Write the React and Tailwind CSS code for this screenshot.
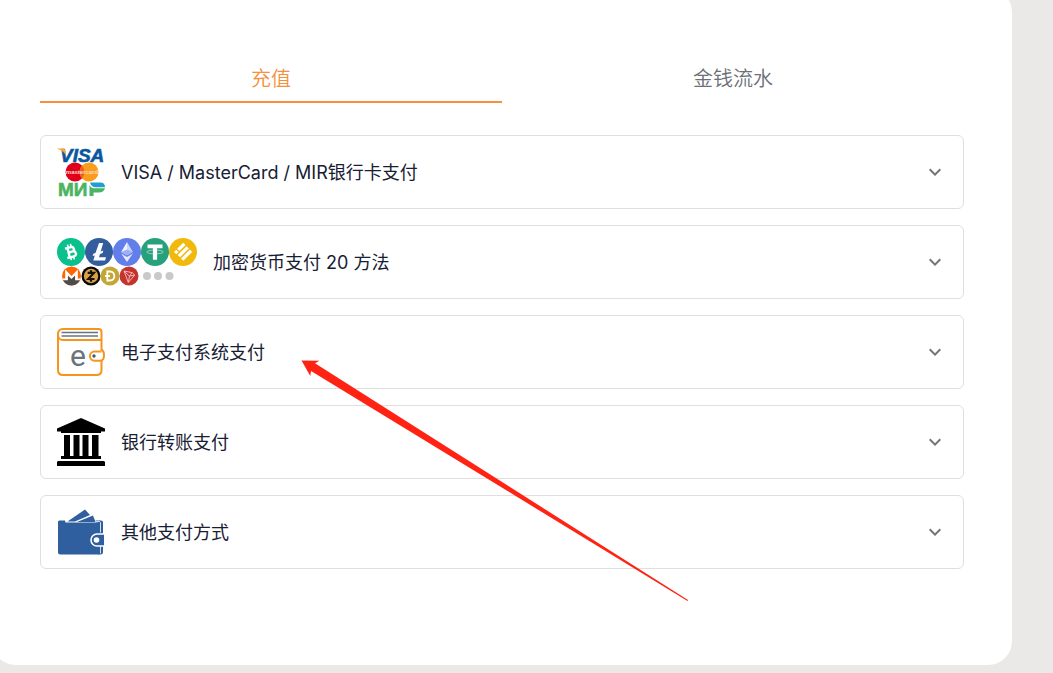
import React, { useState } from "react";

const CardsIcon = () => (
  <svg width="48" height="48" viewBox="0 0 48 48" className="shrink-0 overflow-visible" aria-hidden="true">
    <text x="3" y="14" fontSize="19" fontWeight="700" fontStyle="italic" fontFamily="Liberation Sans" fill="#0a57a0" stroke="#0a57a0" strokeWidth="0.6">VISA</text>
    <path d="M0.5 0.5h5.600c1.200 0 1.800 0.600 2 1.600l1.100 5.600C7.600 4.400 4.700 2 0.500 1z" fill="#f9a533" />
    <circle cx="18" cy="24" r="9.500" fill="#e0001b" />
    <circle cx="32" cy="24" r="9.500" fill="#fb9d1c" />
    <path d="M25 17.600a9.500 9.500 0 0 1 0 12.800a9.500 9.500 0 0 1 0-12.800z" fill="#f0601a" />
    <text x="25" y="26" fontSize="6" fontWeight="700" fontFamily="Liberation Sans" fill="#fbd9c4" textAnchor="middle">mastercard</text>
    <text x="1" y="48" fontSize="19" fontWeight="700" fontFamily="Liberation Sans" fill="#4bb462" stroke="#4bb462" strokeWidth="0.6">МИ</text>
    <path d="M32.500 37v11h4v-3.500H42c3 0 5.300-1.500 6-4.300H37c-2 0-3.500-1-4.500-3.200z" fill="#4bb462" />
    <path d="M33 34.500H43.500c2.800 0 4.500 2 4.500 4.700H39c-3.200 0-5.300-1.700-6-4.700z" fill="#1f9fd0" />
  </svg>
);

const CryptoIcon = () => (
  <svg width="140" height="48" viewBox="0 0 140 48" className="shrink-0" aria-hidden="true">
    <circle cx="14" cy="14" r="14" fill="#0ac18e" />
    <g transform="rotate(-14 14 14)" stroke="#fff" fill="none" strokeWidth="2.400">
      <path d="M9 9.200h6.200a2.300 2.300 0 0 1 0 4.700H11.500M11.500 13.900h4.400a2.500 2.500 0 0 1 0 5H9M11.500 9v10" />
      <path d="M12.400 6v3M15.400 6v3M12.400 19v3M15.400 19v3" strokeWidth="1.600" />
    </g>

    <circle cx="42" cy="14" r="14" fill="#345d9d" />
    <path d="M42 5h4.200l-2.500 8.500 2.600-0.900-0.600 2.400-2.700 0.900-1 3.300h7l-0.900 3.200H36.300l1.500-5-2.100 0.700 0.600-2.400 2.200-0.800z" fill="#fff" />

    <circle cx="70" cy="14" r="14" fill="#627eea" />
    <path d="M70 4l-5.800 10L70 17.300z" fill="#fff" fillOpacity="0.9" />
    <path d="M70 4l5.800 10L70 17.300z" fill="#cbd5fa" />
    <path d="M64.200 15.600L70 19l5.800-3.400L70 24z" fill="#e4e9fd" />
    <path d="M64.200 14L70 11.400l5.800 2.600L70 17.300z" fill="#9db0f3" />

    <circle cx="98" cy="14" r="14" fill="#26a17b" />
    <ellipse cx="98" cy="14" rx="8.300" ry="1.900" fill="none" stroke="#a9dccb" strokeWidth="0.800" />
    <path d="M90.500 6.500h15v3.700h-5.400v11.500h-4.200V10.200h-5.400z" fill="#fff" />

    <circle cx="126" cy="14" r="14" fill="#f0b90b" />
    <g fill="#fff">
      <path d="M119.300 11.700l2.300 2.300-2.300 2.300-2.300-2.300z" />
      <path d="M126.200 4.800l2.300 2.300-6 6-2.300-2.300z" />
      <path d="M129.500 8.200l2.300 2.300-8.800 8.800-2.300-2.300z" />
      <path d="M132.900 11.600l2.300 2.300-8.900 8.900-2.300-2.300z" />
    </g>

    <circle cx="14.500" cy="38" r="9.500" fill="#f60" />
    <path d="M5.900 42h5v-4.800l3.600 3.600 3.600-3.600V42h5a9.500 9.500 0 0 1-17.200 0z" fill="#4c4c4c" />
    <path d="M5.200 40.500h3V31.600l6.300 6.300 6.300-6.300v8.900h3l-0.700 1.700h-5V37.400l-3.600 3.500-3.600-3.500v4.800h-5z" fill="#fff" />

    <circle cx="34" cy="38" r="9.500" fill="#090806" />
    <circle cx="34" cy="38" r="7.200" fill="#d9a24a" />
    <path d="M30.700 34.900h6.200L31.300 41h6.200M34 32.300v2.200M34 41.500v2.200" stroke="#17120a" strokeWidth="2.200" fill="none" />

    <circle cx="53" cy="38" r="9.500" fill="#c3a634" />
    <path d="M50.300 33.500h2.700c5.800 0 5.800 9 0 9h-2.700zM48 38h5" stroke="#fff" strokeWidth="1.800" fill="none" />

    <circle cx="72" cy="38" r="9.500" fill="#c4342e" />
    <path d="M67 33l8 1.600 2.700 2.500-6.400 7.300zM67 33l5.500 5.200 5.200-1.100M75 34.600l-2.500 3.600-1.200 6.200" stroke="#f4c4c2" strokeWidth="0.900" fill="none" />

    <g fill="#c9c9c9">
      <circle cx="90" cy="38" r="4" />
      <circle cx="101" cy="38" r="4" />
      <circle cx="112.500" cy="38" r="4" />
    </g>
  </svg>
);

const EWalletIcon = () => (
  <svg width="48" height="48" viewBox="0 0 48 48" className="shrink-0" aria-hidden="true">
    <g fill="none" stroke="#f7941e" strokeWidth="2">
      <path d="M44.500 22V4c0-2-1-3-3-3H6C2.700 1 1 3 1 6.500S2.700 12 6 12h38.500" />
      <path d="M1 6.500V42c0 3.300 1.700 5 5 5h33.500c3.300 0 5-1.700 5-5v-9" />
      <path d="M44.500 23.500H37.500a4.600 4.600 0 0 0 0 9.200H43c2.700 0 4-2 4-5.500S46 22 44 21.500" />
    </g>
    <path d="M4.500 4.500h36.500M4.500 8h36.500" stroke="#68737d" strokeWidth="1.500" fill="none" />
    <circle cx="37" cy="28" r="1.700" fill="#4c5a67" />
    <text x="13" y="38" fontSize="30" fontFamily="Roboto" fill="#68737d">e</text>
  </svg>
);

const BankIcon = () => (
  <svg width="48" height="48" viewBox="0 0 48 48" className="shrink-0" aria-hidden="true">
    <path d="M24 0l24 10.500V13.500H44v1.500H4v-1.500H0v-3z" />
    <path d="M7 17h6v21H7zM16.500 17h6v21h-6zM25.500 17h6v21h-6zM35 17h6.500v21H35z" />
    <path d="M4 38h40v3H4zM1 43h46l1 1v4H0v-4z" />
  </svg>
);

const OtherWalletIcon = () => (
  <svg width="48" height="48" viewBox="0 0 48 48" className="shrink-0" aria-hidden="true">
    <path d="M10.500 13.500L28 1.500l5 5.500-15 6.500z" fill="#2f5f9e" />
    <path d="M20 14l16-6.500 2.500 6.500z" fill="#2f5f9e" />
    <path d="M1 14c0-1 0.800-1.500 2-1.500h5l0.500 2H42v32H3.300C1.700 46.500 1 45.700 1 44z" fill="#2f5f9e" />
    <path d="M38.500 12.500h5.500c1.200 0 2 0.700 2 2V44c0 1.700-0.800 2.500-2.300 2.500H41v-32h-2z" fill="#2f5f9e" />
    <path d="M38.500 13.500h3.500c1 0 1.500 0.500 1.500 1.500v9.500M43.500 38v7.500" stroke="#fff" strokeWidth="0.800" fill="none" />
    <path d="M47 26h-7a6 6 0 0 0 0 12h7" fill="#2f5f9e" stroke="#fff" strokeWidth="1.600" />
    <circle cx="39.500" cy="32" r="2.800" fill="#fff" />
  </svg>
);

const tabs = [
  { id: "deposit", label: "充值" },
  { id: "history", label: "金钱流水" }
];

const methods = [
  { id: "cards", label: "VISA / MasterCard / MIR银行卡支付", Icon: CardsIcon },
  { id: "crypto", label: "加密货币支付 20 方法", Icon: CryptoIcon },
  { id: "ewallet", label: "电子支付系统支付", Icon: EWalletIcon },
  { id: "bank", label: "银行转账支付", Icon: BankIcon },
  { id: "other", label: "其他支付方式", Icon: OtherWalletIcon }
];

const App = () => {

  const [activeTab, setActiveTab] = useState("deposit");

  return (

    <div className="relative min-h-screen overflow-hidden bg-[#eae9e7] pr-[41px] pb-2 font-['Inter','Noto_Sans_CJK_SC',sans-serif]">

      <main className="-ml-2 -mt-3 rounded-3xl bg-white px-12 pt-16 pb-24">

        {/* TABS */}

        <div role="tablist" className="flex">

          {tabs.map((tab) => (

            <button
              key={tab.id}
              type="button"
              role="tab"
              aria-selected={activeTab === tab.id}
              onClick={() => setActiveTab(tab.id)}
              className={`flex-1 border-b-2 pt-3 pb-1.5 text-xl leading-[31px] font-[350] ${
                activeTab === tab.id
                  ? "border-[#f5903d] text-[#f5903d]"
                  : "border-transparent text-[#6b6f76]"
              }`}
            >
              {tab.label}
            </button>

          ))}

        </div>

        {/* PAYMENT METHODS */}

        <div className="mt-8 space-y-4">

          {methods.map(({ id, label, Icon }) => (

            <button
              key={id}
              type="button"
              className="flex w-full items-center gap-4 rounded-md border border-[#dfdfdf] px-4 py-3 text-left text-lg text-[#172033]"
            >

              <Icon />

              <span className="flex-1 pt-0.5">{label}</span>

              <svg width="24" height="24" viewBox="0 0 24 24" fill="#757575" aria-hidden="true">
                <path d="M7.410 8.590 12 13.170l4.590-4.580L18 10l-6 6-6-6z" />
              </svg>

            </button>

          ))}

        </div>

      </main>

      {/* POINTER */}

      <svg
        width="400"
        height="250"
        viewBox="0 0 400 250"
        className="pointer-events-none absolute top-[356px] left-[296px]"
        aria-hidden="true"
      >
        <path d="M5.500 4.500L23.500 4.800L19 7.300L392 244L391.500 245L15 15L14.300 20z" fill="#ff2314" />
      </svg>

    </div>

  );

};

export default App;
